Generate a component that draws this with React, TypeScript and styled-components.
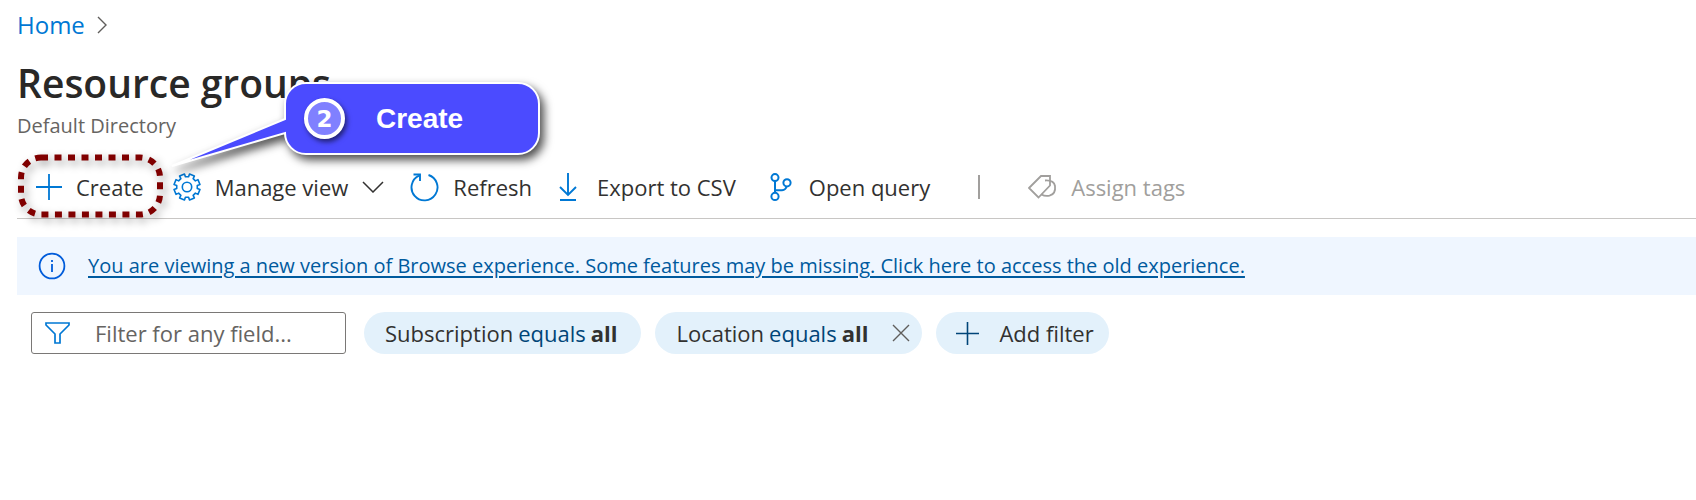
import React from "react";
import styled, { createGlobalStyle } from "styled-components";

const GlobalStyle = createGlobalStyle`
  * { box-sizing: border-box; }
  body {
    margin: 0;
    background: #fff;
    color: #323130;
    font-family: "Open Sans", "Noto Sans", sans-serif;
    font-size: 22px;
    line-height: 30px;
  }
  button, input {
    font: inherit;
    color: inherit;
  }
`;

const Page = styled.main`
  padding: 9px 0 24px 17px;
`;

const Breadcrumb = styled.nav`
  display: flex;
  align-items: center;
  gap: 12px;
  height: 32px;
`;

const HomeLink = styled.a`
  color: #0078d4;
  font-size: 24px;
  text-decoration: none;
`;

const Heading = styled.header`
  position: relative;
  padding-top: 14px;
`;

const Title = styled.h1`
  margin: 0;
  font-size: 39px;
  line-height: 56px;
  font-weight: 600;
  color: #292827;
`;

const Subtitle = styled.p`
  margin: 0;
  font-size: 20px;
  line-height: 30px;
  color: #666462;
`;

const Callout = styled.aside`
  position: absolute;
  left: 151px;
  top: 41px;
  z-index: 2;
  width: 380px;
  height: 84px;
`;

const CalloutShape = styled.svg`
  position: absolute;
  inset: 0;
  overflow: visible;
`;

const CalloutContent = styled.div`
  position: absolute;
  left: 136px;
  top: 0;
  display: flex;
  align-items: center;
  gap: 31px;
  height: 73px;
  color: #fff;
  font-family: "Liberation Sans", Arial, sans-serif;
  font-size: 28px;
  font-weight: 700;
`;

const StepBadge = styled.span`
  display: grid;
  place-items: center;
  width: 41px;
  height: 41px;
  border: 4px solid #fff;
  border-radius: 50%;
  background: #8080ff;
  box-shadow: 2px 3px 5px rgba(0, 0, 0, 0.55);
  font-family: "DejaVu Sans", sans-serif;
  font-size: 23px;
`;

const Toolbar = styled.div`
  display: flex;
  align-items: center;
  height: 78px;
  padding: 15px 0 0 19px;
  border-bottom: 1px solid #c8c6c4;
`;

const Command = styled.button<{ $gap: number; $after: number }>`
  position: relative;
  display: flex;
  align-items: center;
  gap: ${(p) => p.$gap}px;
  margin: 0 ${(p) => p.$after}px 0 0;
  padding: 0;
  border: 0;
  background: none;
  white-space: nowrap;

  &:disabled {
    color: #a19f9d;
  }
`;

const Highlight = styled.svg`
  position: absolute;
  left: -19px;
  top: -18px;
  overflow: visible;
  pointer-events: none;
`;

const Separator = styled.span`
  width: 2px;
  height: 24px;
  margin-right: 48px;
  background: #a19f9d;
`;

const Banner = styled.div`
  display: flex;
  align-items: center;
  gap: 22px;
  min-height: 58px;
  margin-top: 18px;
  padding: 0 21px;
  background: #eff6ff;
`;

const BannerLink = styled.a`
  color: #005a9e;
  font-size: 20px;
  text-decoration-thickness: 2px;
  text-underline-offset: 3px;
`;

const Filters = styled.form`
  display: flex;
  align-items: center;
  flex-wrap: wrap;
  gap: 14px;
  padding: 17px 14px 0;
`;

const SearchBox = styled.label`
  display: flex;
  align-items: center;
  gap: 25px;
  width: 315px;
  height: 42px;
  margin-right: 4px;
  padding: 0 13px;
  border: 1px solid #7a7876;
  border-radius: 3px;
`;

const SearchInput = styled.input`
  flex: 1;
  min-width: 0;
  padding: 0;
  border: 0;
  outline: 0;
  background: none;

  &::placeholder {
    color: #666462;
    opacity: 1;
  }
`;

const Pill = styled.div`
  display: flex;
  align-items: center;
  height: 42px;
  border-radius: 21px;
  background: #e3f1fb;
`;

const PillButton = styled.button<{ $left?: number; $right?: number; $gap?: number }>`
  display: flex;
  align-items: center;
  gap: ${(p) => p.$gap ?? 5}px;
  height: 42px;
  padding: 0 ${(p) => p.$right ?? 24}px 0 ${(p) => p.$left ?? 21}px;
  border: 0;
  background: none;
  white-space: nowrap;
`;

const Operator = styled.span`
  color: #004578;
`;

const gearPath = (() => {
  const pts: string[] = [];
  const teeth = 8;
  for (let i = 0; i < teeth; i++) {
    const a = (i * 2 * Math.PI) / teeth - Math.PI / 2 + Math.PI / 8;
    [[-0.24, 10.4], [-0.2, 13.2], [0.2, 13.2], [0.24, 10.4]].forEach(([d, r]) => {
      pts.push(`${(14 + r * Math.cos(a + d)).toFixed(2)} ${(14 + r * Math.sin(a + d)).toFixed(2)}`);
    });
  }
  return `M${pts.join("L")}Z`;
})();

const PlusIcon = ({ size = 26, color = "#0078d4" }) => (
  <svg width={size} height={size} viewBox="0 0 26 26" fill="none" stroke={color} strokeWidth="1.8">
    <path d="M13 0V26M0 13H26" />
  </svg>
);

const GearIcon = () => (
  <svg width="28" height="28" viewBox="0 0 28 28" fill="none" stroke="#0078d4" strokeWidth="1.6" strokeLinejoin="round">
    <path d={gearPath} />
    <circle cx="14" cy="14" r="4.7" />
  </svg>
);

const ChevronDown = () => (
  <svg width="22" height="12" viewBox="0 0 22 12" fill="none" stroke="#323130" strokeWidth="1.5">
    <path d="M1 1L11 11L21 1" />
  </svg>
);

const ChevronRight = () => (
  <svg width="10" height="18" viewBox="0 0 10 18" fill="none" stroke="#605e5c" strokeWidth="1.4">
    <path d="M1 1L9 9L1 17" />
  </svg>
);

const RefreshIcon = () => (
  <svg width="29" height="29" viewBox="0 0 29 29" fill="none" stroke="#0078d4" strokeWidth="1.9">
    <path d="M18.5 2A13 13 0 1 1 9 2.6" />
    <path d="M3.5 1.5H10V8" />
  </svg>
);

const DownloadIcon = () => (
  <svg width="18" height="28" viewBox="0 0 18 28" fill="none" stroke="#0078d4" strokeWidth="1.9">
    <path d="M9 0V22M1 14L9 22L17 14M1 27H17" />
  </svg>
);

const BranchIcon = () => (
  <svg width="22" height="28" viewBox="0 0 22 28" fill="none" stroke="#0078d4" strokeWidth="2">
    <circle cx="5" cy="4.6" r="3.5" />
    <circle cx="17" cy="9.8" r="3.6" />
    <circle cx="5" cy="23.4" r="3.6" />
    <path d="M5 8V20M5 17.2H12Q15.8 17 16.5 13.4" />
  </svg>
);

const TagIcon = () => (
  <svg width="29" height="24" viewBox="0 0 29 24" fill="none" stroke="#a19f9d" strokeWidth="1.8">
    <path d="M1 13L13 1H22V10.5L10.5 22.5Z" />
    <path d="M17 5.5Q26 5 27 11Q28 19 21.5 20.7Q17 21.6 13.5 19.5" />
  </svg>
);

const InfoIcon = () => (
  <svg width="28" height="28" viewBox="0 0 28 28" fill="none" stroke="#015cda" strokeWidth="1.8">
    <circle cx="14" cy="14" r="12.4" />
    <path d="M14 12V20M14 8V10" />
  </svg>
);

const FunnelIcon = () => (
  <svg width="25" height="22" viewBox="0 0 25 22" fill="none" stroke="#0078d4" strokeWidth="1.7">
    <path d="M1 1H24V3L15 12V21H10V12L1 3Z" />
  </svg>
);

const CloseIcon = () => (
  <svg width="18" height="18" viewBox="0 0 18 18" fill="none" stroke="#605e5c" strokeWidth="1.4">
    <path d="M1 1L17 17M17 1L1 17" />
  </svg>
);

export default function App() {
  return (
    <>
      <GlobalStyle />
      <Page>
        <Breadcrumb aria-label="Breadcrumb">
          <HomeLink href="#home">Home</HomeLink>
          <ChevronRight />
        </Breadcrumb>

        <Heading>
          <Title>Resource groups</Title>
          <Subtitle>Default Directory</Subtitle>
          <Callout>
            <CalloutShape width="380" height="84" viewBox="0 0 380 84">
              <path
                d="M138 1H350A21 21 0 0 1 371 22V51A21 21 0 0 1 350 72H138A21 21 0 0 1 117 51L4 84L117 37V22A21 21 0 0 1 138 1Z"
                fill="#4b4bff"
                stroke="#fff"
                strokeWidth="2"
                style={{ filter: "drop-shadow(4px 5px 5px rgba(0,0,0,.7))" }}
              />
            </CalloutShape>
            <CalloutContent>
              <StepBadge>2</StepBadge>
              <span>Create</span>
            </CalloutContent>
          </Callout>
        </Heading>

        <Toolbar role="toolbar" aria-label="Resource group commands">
          <Command type="button" $gap={14} $after={29}>
            <PlusIcon />
            Create
            <Highlight width="146" height="64" viewBox="0 0 146 64">
              <rect
                x="4" y="3.5" width="139" height="57" rx="20"
                fill="none" stroke="#800000" strokeWidth="6" strokeDasharray="7 6.5"
                style={{ filter: "drop-shadow(3px 4px 4px rgba(0,0,0,.4))" }}
              />
            </Highlight>
          </Command>
          <Command type="button" $gap={14} $after={26}>
            <GearIcon />
            Manage view
            <ChevronDown />
          </Command>
          <Command type="button" $gap={14} $after={27}>
            <RefreshIcon />
            Refresh
          </Command>
          <Command type="button" $gap={20} $after={34}>
            <DownloadIcon />
            Export to CSV
          </Command>
          <Command type="button" $gap={17} $after={48}>
            <BranchIcon />
            Open query
          </Command>
          <Separator />
          <Command type="button" $gap={14} $after={0} disabled>
            <TagIcon />
            Assign tags
          </Command>
        </Toolbar>

        <Banner>
          <InfoIcon />
          <BannerLink href="#old-experience">
            You are viewing a new version of Browse experience. Some features may be missing. Click here to access the old experience.
          </BannerLink>
        </Banner>

        <Filters>
          <SearchBox>
            <FunnelIcon />
            <SearchInput type="text" aria-label="Filter for any field" placeholder="Filter for any field..." />
          </SearchBox>
          <Pill>
            <PillButton type="button">
              Subscription <Operator>equals</Operator> <b>all</b>
            </PillButton>
          </Pill>
          <Pill>
            <PillButton type="button">
              Location <Operator>equals</Operator> <b>all</b>
            </PillButton>
            <PillButton type="button" aria-label="Remove location filter" $left={0} $right={12}>
              <CloseIcon />
            </PillButton>
          </Pill>
          <Pill>
            <PillButton type="button" $left={20} $right={15} $gap={20}>
              <PlusIcon size={23} color="#004578" />
              Add filter
            </PillButton>
          </Pill>
        </Filters>
      </Page>
    </>
  );
}
